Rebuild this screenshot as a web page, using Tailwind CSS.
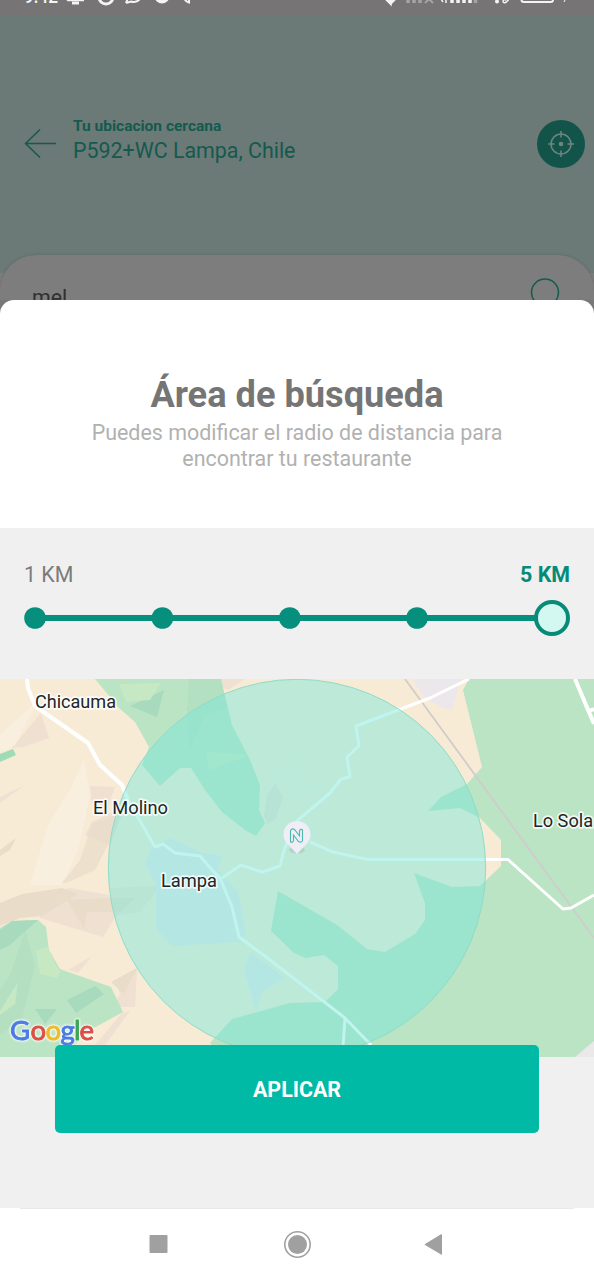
<!DOCTYPE html>
<html lang="es">
<head>
<meta charset="utf-8">
<meta name="viewport" content="width=device-width, initial-scale=1">
<title>Área de búsqueda</title>
<script src="https://cdn.jsdelivr.net/npm/@tailwindcss/browser@4"></script>
</head>
<body class="bg-[#f0f0f0]">
<div class="flex h-[1280px] w-[594px] flex-col overflow-hidden font-[Roboto,sans-serif]">

  <!-- Dimmed page behind the sheet -->
  <div class="h-[300px] shrink-0 overflow-hidden bg-[#7d7d7d]">
    <div class="h-[273px] bg-[#6b7977]">
      <svg class="block h-4 w-full bg-[#767474]" viewBox="0 0 594 16" fill="none">
        <text x="24" y="3" font-size="20" font-weight="500" fill="#f4f4f4" textLength="34" lengthAdjust="spacingAndGlyphs">9:42</text>
        <g stroke="#f4f4f4" stroke-width="2">
          <path d="M66 -3L68 0H84" stroke-width="2.500"/><path d="M72 3H79" stroke-width="3"/>
          <path d="M99 -3A7 7 0 0 0 113 -3" stroke-width="3"/>
          <path d="M126 3L128 -2M126 3L131 1.500A8 8 0 0 0 141 -3"/>
          <circle cx="162" cy="-4" r="7.500" fill="#f4f4f4" stroke="none"/>
          <path d="M184 -4Q184 1 189 2.500V-1"/>
          <path d="M386 -1L390.500 3.500V-2M390.500 3.500L396 -2" stroke-width="2.500"/>
          <path d="M521.500 -4V0Q521.500 2 524 2H550.500Q553 2 553 0V-4"/>
          <circle cx="497" cy="1.500" r="2" fill="#f4f4f4" stroke="none"/>
          <path d="M503 2Q503 -1 506 0M506 2Q509 1 508 -2M503 2Q505 4 507 1" stroke-width="1.500"/>
          <path d="M566 -2L564 2" stroke-width="1"/>
          <path d="M441 -1L443 2M446 0V3" stroke-width="1.500"/>
          <path d="M452 -4V3M458 -4V3M464 -4V3M470 -4V3" stroke-width="3.500"/>
        </g>
        <g stroke="#a5a4a4"><path d="M408 -4V3M414 -4V3M420 -4V3M475.500 -4V3" stroke-width="3.500"/><path d="M425 3L431 -3M427 -3L433 3" stroke-width="2"/></g>
      </svg>
      <div class="flex items-center pt-[104px] pr-[9px] pl-6">
        <svg class="h-8 w-8" viewBox="0 0 32 32" fill="none" stroke="#145a4e" stroke-width="1.500"><path d="M32 15.500H1.500M16 1.500L1.500 15.500L16 29.500"/></svg>
        <div class="ml-[17px] flex-1 text-[#145a4e]">
          <div class="-mt-[9px] text-[15.500px] leading-[18px] font-bold">Tu ubicacion cercana</div>
          <div class="mt-1 text-[21.400px] leading-6">P592+WC Lampa, Chile</div>
        </div>
        <div class="flex h-12 w-12 items-center justify-center rounded-full bg-[#125449]">
          <svg class="h-[26px] w-[26px]" viewBox="0 0 26 26" fill="none" stroke="#6f8580" stroke-width="1.500"><circle cx="13" cy="13" r="10"/><circle cx="13" cy="13" r="2.300" fill="#6f8580" stroke="none"/><path d="M13 0V6.500M13 19.500V26M0 13H6.500M19.500 13H26"/></svg>
        </div>
      </div>
    </div>
    <div class="-mt-[18px] flex h-20 justify-between rounded-t-[36px] bg-[#7d7d7d] pr-[33px] pl-8 shadow-[0_0_3px_rgba(60,60,60,.3)]">
      <div class="pt-[29px] text-[21.400px] leading-7 text-[#303030]">mel</div>
      <svg class="mt-[22px] h-8 w-[32px]" viewBox="0 0 32 32" fill="none" stroke="#145a4e" stroke-width="1.500"><circle cx="16" cy="15.500" r="13.500"/></svg>
    </div>
  </div>

  <!-- Sheet title; the wrapper's colour shows at its rounded corners -->
  <div class="h-[228px] shrink-0 bg-[#787878]">
    <div class="h-full rounded-t-[14px] bg-white pt-[73px] text-center">
      <h1 class="text-[36.200px] leading-[44px] font-bold text-[#757575]">Área de búsqueda</h1>
      <p class="mt-[3px] text-[21.450px] leading-[25.500px] text-[#b1b1b1]">Puedes modificar el radio de distancia para<br>encontrar tu restaurante</p>
    </div>
  </div>

  <!-- Radius slider -->
  <div class="h-[151px] shrink-0 bg-[#f0f0f0] px-6 pt-[35px]">
    <div class="flex justify-between text-[21.400px] leading-6">
      <span class="text-[#7b7b7b]">1 KM</span>
      <span class="font-bold text-[#058c78]">5 KM</span>
    </div>
    <svg class="mt-[13px] block h-9 w-[546px]" viewBox="0 0 546 36">
      <path d="M10 18H515" stroke="#058f7c" stroke-width="6"/>
      <g fill="#058f7c"><circle cx="11" cy="18" r="10.800"/><circle cx="138.400" cy="18" r="10.800"/><circle cx="265.800" cy="18" r="10.800"/><circle cx="393" cy="18" r="10.800"/></g>
      <circle cx="528" cy="18" r="16" fill="#d2f8f1" stroke="#078b77" stroke-width="4"/>
    </svg>
  </div>

  <!-- Map -->
  <svg class="block h-[378px] w-[594px] shrink-0" viewBox="0 679 594 378" fill="none">
    <rect y="679" width="594" height="378" fill="#f8ebd6"/>
    <!-- hill shading -->
    <g fill="#efe0d2">
      <path d="M12 748L41 713L49 738L23 747Z"/>
      <path d="M90 786L115 787L108 806H92Z"/>
      <path d="M196 679H245L228 690Z"/>
      <path d="M92 822L125 806L110 845L85 835Z"/>
      <path d="M45 893L70 888L110 895L120 910L103 937L40 918Z"/>
      <path d="M115 980L137 968L135 1007H112L120 994Z"/>
      <path d="M68 970L92 956L78 973Z"/>
      <path d="M95 1045L122 1013L130 1011L105 1045Z"/>
      <path d="M267 796L275 783L283 797L276 818L268 824L264 816Z"/>
      <path d="M0 803L25 785L0 797Z"/>
    </g>
    <g fill="#f9efdf">
      <path d="M0 735L38 700L28 720L15 745L0 752Z"/>
      <path d="M84 760L90 795L78 850L62 885L30 885L48 825L70 790Z"/>
    </g>
    <g fill="#e9dcc8">
      <path d="M0 903L22 894L62 888L78 894L42 916L20 918L0 926Z"/>
      <path d="M62 883L80 860L92 824L122 812L108 845L95 870L66 883Z" opacity=".75"/>
      <path d="M67 900L110 898L135 898L120 912L87 912L84 929Z"/>
      <path d="M111 982L137 968L124 994Z"/>
      <path d="M0 850L16 838L10 850L0 856Z"/>
      <path d="M110 888L160 886L140 912L116 915Z" opacity=".5"/>
    </g>
    <!-- vegetation -->
    <g fill="#bbe4c4">
      <path d="M95 679H221L232 725L250 760L260 785L259 810L265 823L256 836L245 830L222 812L205 790L191 768H180L160 786L142 765L149 747L135 722L118 707L110 697Z"/>
      <path d="M469 679H594V1057H222L210 1043L232 1019L290 1003L325 1002L338 989V966L324 955L306 958L294 953L271 931L278 891L337 925L367 949L385 952L415 934L425 920V903L414 873L452 887L480 886L501 866V840L480 818L460 808L428 811L441 797L467 784L482 767L463 690Z"/>
      <path d="M0 928L12 921L38 920L46 927L49 950L60 969L111 987L123 1012L90 1030L62 1057H0Z"/>
    </g>
    <path d="M0 754L13 749L16 755L0 762Z" fill="#9edbb6"/>
    <path d="M575 1057L594 1041V1057Z" fill="#ebe8ea"/>
    <g fill="#a8dabd">
      <path d="M189 679H221L227 708L205 715L190 750L187 715Z" opacity=".4"/>
      <path d="M130 706L164 690L157 717Z"/>
      <path d="M0 930L12 921L38 920L10 945L0 950Z"/>
      <path d="M67 1000L95 986L104 994L76 1013Z"/>
      <path d="M35 1009H57L45 1024Z"/>
      <path d="M0 990L10 975L25 930L35 965L22 1020L0 1035Z" opacity=".35"/>
    </g>
    <g fill="#c6e8c2">
      <path d="M119 684L161 683L150 700L126 702Z"/>
      <path d="M36 951L47 947L60 972L57 978L40 974Z"/>
      <path d="M0 1011L18 982L15 1004L0 1015Z"/>
      <path d="M206 752L250 755L209 770Z"/>
    </g>
    <!-- built-up areas -->
    <g fill="#e9e7ed">
      <path d="M412 679H461L452 710L443 708L425 698Z" fill="#ebe7ea"/>
      <path d="M150 850L170 838L200 852L222 856L218 870L238 892L246 932L240 942L172 946L156 928V884L145 864Z"/>
      <path d="M250 952L285 978L262 992L256 1012L250 990L244 970Z"/>
      <path d="M280 760L306 756L295 775L335 790L295 798L270 780Z" opacity=".2"/>
    </g>
    <!-- roads and railway -->
    <path d="M405 679L594 938" stroke="#cfcccb" stroke-width="1.800"/>
    <g stroke="#fff" stroke-width="3" stroke-linejoin="round">
      <path d="M27 679L28 688L35 706L55 720L88 743L100 765L122 785L128 800" stroke-width="4"/>
      <path d="M128 800L155 847L163 844L175 853L200 856L213 871L220 878L232 907L239 937L270 960L345 1018L371 1045"/>
      <path d="M345 1018L343 1047"/>
      <path d="M469 679L430 698L356 726L359 746L347 757L350 777L341 779L330 793L298 820L284 850L280 866L262 872L241 865L222 878"/>
      <path d="M310 842L333 852L368 859.500H508L563 909L571 908L594 895"/>
      <path d="M575 679L594 724M589 711L594 709" stroke-width="4"/>
    </g>
    <!-- search radius -->
    <circle cx="297" cy="868" r="188.700" fill="#76e8da" fill-opacity=".46" stroke="#90dcc8" stroke-width="1"/>
    <!-- pin -->
    <ellipse cx="297" cy="850" rx="8" ry="3.500" fill="#000" opacity=".08"/>
    <path d="M297 854L288 844.500A13.500 13.500 0 1 1 306 844.500Z" fill="#efeef7"/>
    <path d="M290.500 842V830.500Q292 828 294.500 829.500L299.500 836V830.500Q301 828.500 302.500 830V841Q301 843 298.500 841.500L293.500 835V841Q292 843 290.500 842Z" stroke="#4db8ad" stroke-width="1.100"/>
    <g font-size="18.700" fill="#202626" stroke="#fff" stroke-opacity=".8" stroke-width="3.500" stroke-linejoin="round" paint-order="stroke">
      <text x="35" y="708" textLength="81" lengthAdjust="spacingAndGlyphs">Chicauma</text>
      <text x="93" y="813.500" textLength="75" lengthAdjust="spacingAndGlyphs">El Molino</text>
      <text x="161" y="886.500" textLength="56" lengthAdjust="spacingAndGlyphs">Lampa</text>
      <text x="533" y="826.500" textLength="60" lengthAdjust="spacingAndGlyphs">Lo Sola</text>
    </g>
    <!-- Google wordmark with a white halo -->
    <g class="[filter:drop-shadow(0_0_1px_#fff)_drop-shadow(0_0_1px_#fff)]" font-family="Lato, sans-serif" font-size="27.500" stroke-linejoin="round" stroke-width=".9">
      <text y="1039.500" x="10 30.500 45.500 60.500 74 79.500"><tspan fill="#4a7be6" stroke="#4a7be6">G</tspan><tspan fill="#dc4f45" stroke="#dc4f45">o</tspan><tspan fill="#f2b92a" stroke="#f2b92a">o</tspan><tspan fill="#4a7be6" stroke="#4a7be6">g</tspan><tspan fill="#3da656" stroke="#3da656">l</tspan><tspan fill="#dc4f45" stroke="#dc4f45">e</tspan></text>
    </g>
  </svg>

  <!-- Apply -->
  <div class="relative -mt-3 h-[163px] shrink-0 px-[55px]">
    <button class="block h-[88px] w-full rounded-[5px] bg-[#00baa5] pt-[3px] text-[21.400px] font-bold text-white">APLICAR</button>
  </div>

  <!-- System navigation -->
  <div class="h-[72px] shrink-0 bg-white">
    <div class="mx-5 h-px bg-[#e9e9e9]"></div>
    <svg class="block h-[71px] w-full" viewBox="0 1209 594 71" fill="#a0a0a0">
      <rect x="149.500" y="1235" width="18" height="18" rx="1"/>
      <circle cx="297.500" cy="1244.500" r="9.500"/><circle cx="297.500" cy="1244.500" r="12.700" fill="none" stroke="#a0a0a0" stroke-width="1.600"/>
      <path d="M442 1235V1254Q442 1255 441 1254.500L425 1245Q424.300 1244.500 425 1244L441 1234.300Q442 1234 442 1235Z"/>
    </svg>
  </div>
</div>
</body>
</html>
